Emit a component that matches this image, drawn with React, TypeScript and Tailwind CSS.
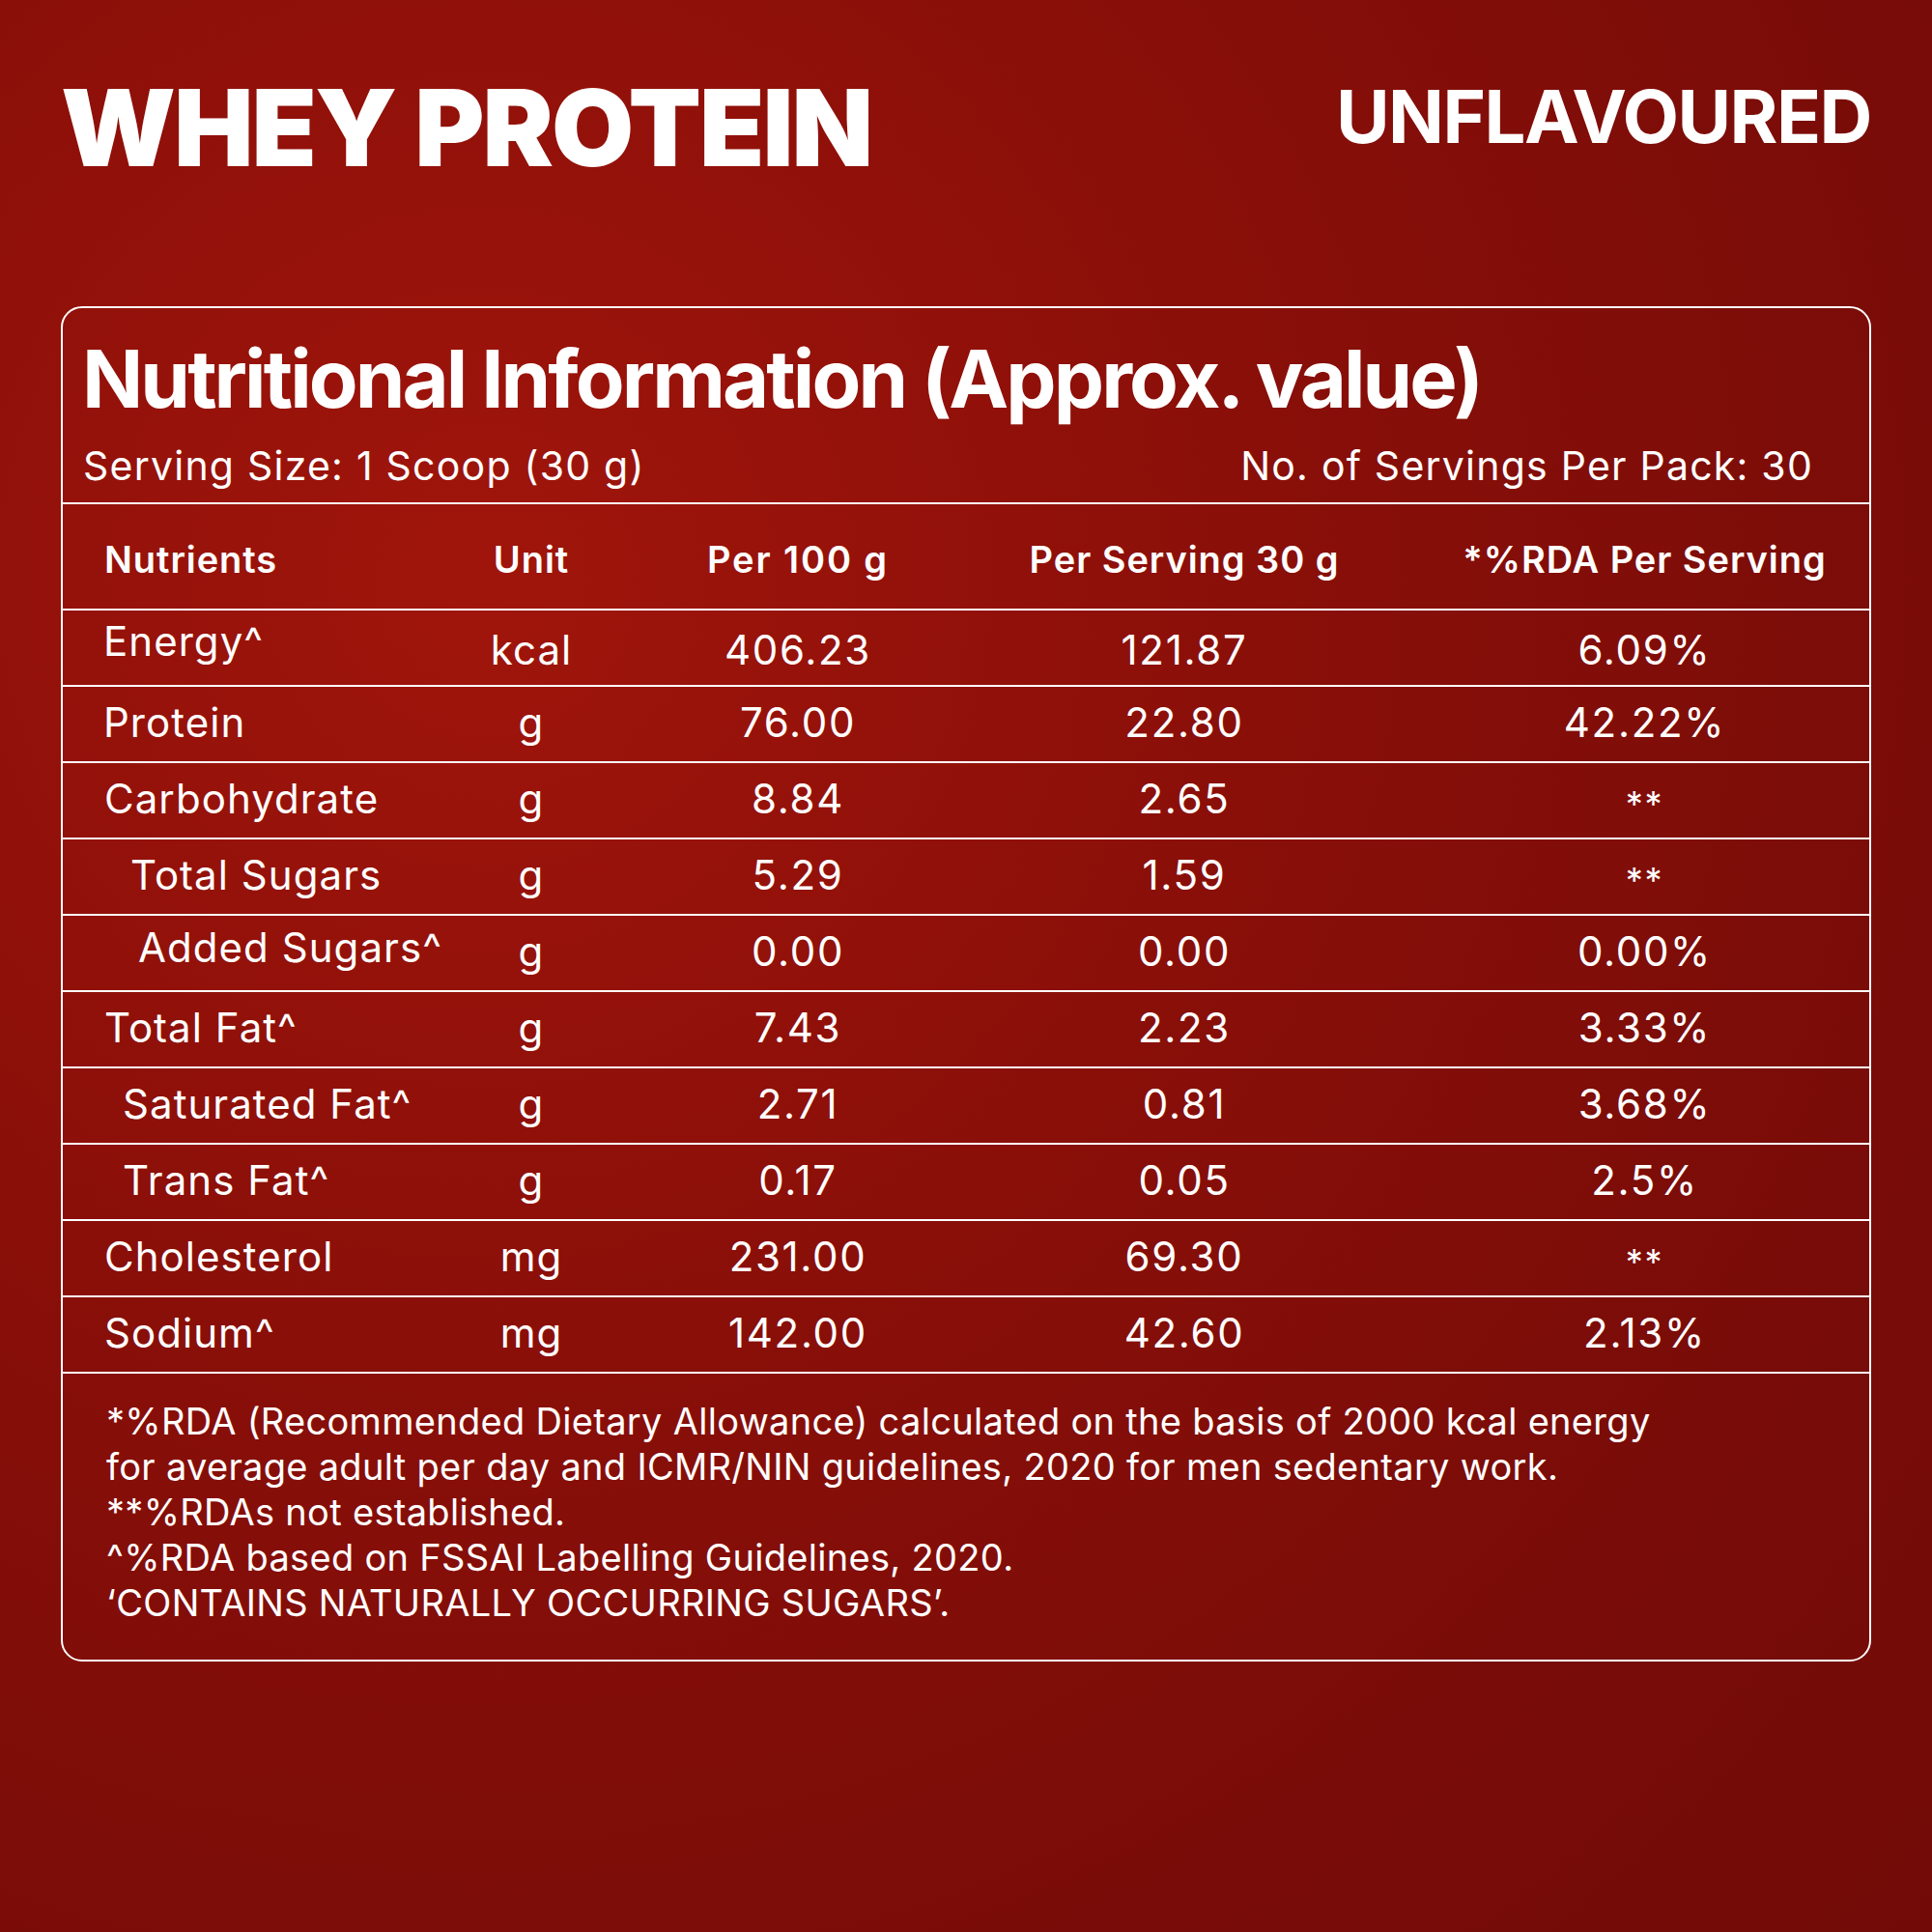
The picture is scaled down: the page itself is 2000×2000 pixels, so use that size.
const rows = [
  { name: 'Energy^', unit: 'kcal', per100: '406.23', perServing: '121.87', rda: '6.09%', pad: 'pl-[42px]', nameShift: 'mb-[10px]', valShift: 'mt-[8px]' },
  { name: 'Protein', unit: 'g', per100: '76.00', perServing: '22.80', rda: '42.22%', pad: 'pl-[42px]', nameShift: '', valShift: '' },
  { name: 'Carbohydrate', unit: 'g', per100: '8.84', perServing: '2.65', rda: '**', pad: 'pl-[43px]', nameShift: '', valShift: '' },
  { name: 'Total Sugars', unit: 'g', per100: '5.29', perServing: '1.59', rda: '**', pad: 'pl-[70px]', nameShift: '', valShift: '' },
  { name: 'Added Sugars^', unit: 'g', per100: '0.00', perServing: '0.00', rda: '0.00%', pad: 'pl-[78px]', nameShift: 'mb-[8px]', valShift: '' },
  { name: 'Total Fat^', unit: 'g', per100: '7.43', perServing: '2.23', rda: '3.33%', pad: 'pl-[43px]', nameShift: '', valShift: '' },
  { name: 'Saturated Fat^', unit: 'g', per100: '2.71', perServing: '0.81', rda: '3.68%', pad: 'pl-[62px]', nameShift: '', valShift: '' },
  { name: 'Trans Fat^', unit: 'g', per100: '0.17', perServing: '0.05', rda: '2.5%', pad: 'pl-[62px]', nameShift: '', valShift: '' },
  { name: 'Cholesterol', unit: 'mg', per100: '231.00', perServing: '69.30', rda: '**', pad: 'pl-[43px]', nameShift: '', valShift: '' },
  { name: 'Sodium^', unit: 'mg', per100: '142.00', perServing: '42.60', rda: '2.13%', pad: 'pl-[43px]', nameShift: '', valShift: '' },
];

const notes = [
  '*%RDA (Recommended Dietary Allowance) calculated on the basis of 2000 kcal energy',
  'for average adult per day and ICMR/NIN guidelines, 2020 for men sedentary work.',
  '**%RDAs not established.',
  '^%RDA based on FSSAI Labelling Guidelines, 2020.',
  '\u2018CONTAINS NATURALLY OCCURRING SUGARS\u2019.',
];

const App = () => {
  return (
    <div className="w-[2000px] h-[2000px] px-[63px] pt-[77px] font-['Inter',sans-serif] text-white bg-[radial-gradient(circle_at_25%_30%,#a0150b_0%,#8a0f09_39%,#790c08_75%,#720b07_100%)]">
      <header className="flex justify-between items-start">
        <h1 className="text-[110px] leading-none font-black tracking-[-0.018em]">WHEY PROTEIN</h1>
        <p className="mt-[5px] text-[76px] leading-none font-bold tracking-[-0.02em]">UNFLAVOURED</p>
      </header>

      <section className="mt-[130px] h-[1403px] rounded-[22px] border-2 border-white">
        <h2 className="pl-[20px] pt-[32px] text-[83px] leading-none font-bold tracking-[-0.035em]">
          Nutritional Information (Approx. value)
        </h2>
        <div className="mt-[28px] flex justify-between pl-[21px] pr-[58px] text-[41px] leading-none tracking-[0.03em]">
          <span>Serving Size: 1 Scoop (30 g)</span>
          <span>No. of Servings Per Pack: 30</span>
        </div>

        {/* table */}
        <div className="mt-[17px]">
          <div className="flex h-[110px] border-t-2 border-white pt-[6px] text-[38px] leading-none font-semibold tracking-[0.025em]">
            <div className="w-[425px] flex items-center pl-[43px]">Nutrients</div>
            <div className="w-[120px] flex items-center justify-center">Unit</div>
            <div className="w-[432px] flex items-center justify-center tracking-[0.05em]">Per 100 g</div>
            <div className="w-[368px] flex items-center justify-center">Per Serving 30 g</div>
            <div className="flex-1 flex items-center justify-center pl-[60px]">*%RDA Per Serving</div>
          </div>

          {rows.map((row) => (
            <div key={row.name} className="flex h-[79px] border-t-2 border-white pb-[3px] text-[42px] leading-none">
              <div className={`w-[425px] flex items-center tracking-[0.025em] ${row.pad}`}>
                <span className={row.nameShift}>{row.name}</span>
              </div>
              <div className="w-[120px] flex items-center justify-center tracking-[0.025em]">
                <span className={row.valShift}>{row.unit}</span>
              </div>
              <div className="w-[432px] flex items-center justify-center tracking-[0.04em]">
                <span className={row.valShift}>{row.per100}</span>
              </div>
              <div className="w-[368px] flex items-center justify-center tracking-[0.04em]">
                <span className={row.valShift}>{row.perServing}</span>
              </div>
              <div className="flex-1 flex items-center justify-center pl-[60px] tracking-[0.04em]">
                <span className={row.rda === '**' ? 'mt-[9px] text-[36px]' : row.valShift}>{row.rda}</span>
              </div>
            </div>
          ))}

          <div className="border-t-2 border-white pt-[26px] pl-[45px] text-[38px] leading-[47px] tracking-[0.008em]">
            {notes.map((line) => (
              <p key={line} className="whitespace-nowrap">{line}</p>
            ))}
          </div>
        </div>
      </section>
    </div>
  );
};

export default App;
